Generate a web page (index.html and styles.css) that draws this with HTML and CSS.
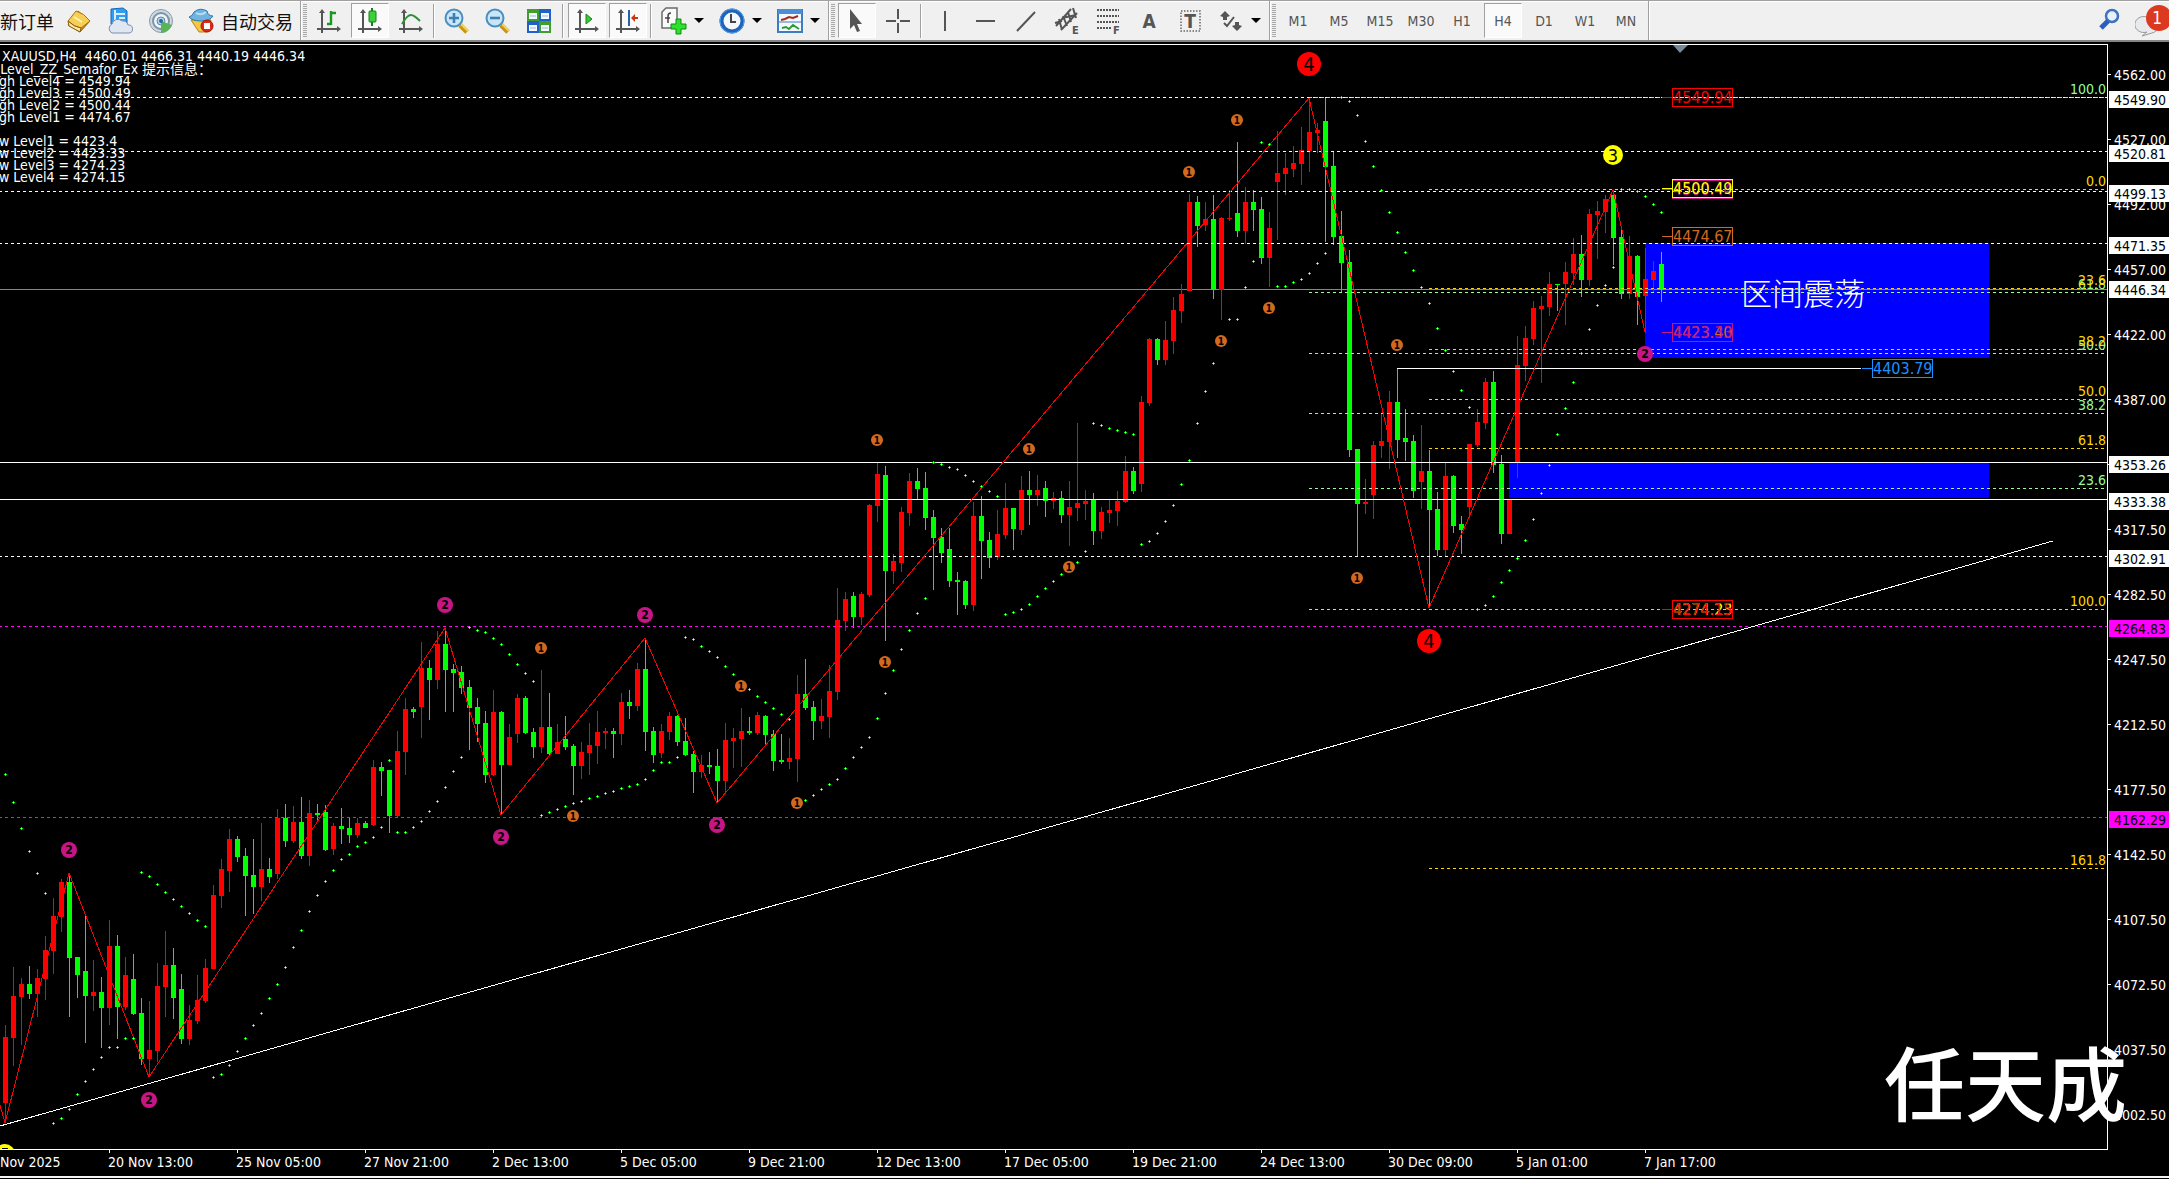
FILE: index.html
```html
<!DOCTYPE html>
<html lang="zh-CN">
<head>
<meta charset="utf-8">
<title>XAUUSD,H4</title>
<link rel="stylesheet" href="styles.css">
</head>
<body>
<header class="toolbar">
  <div class="group group-first">
    <button class="btn btn-text btn-order">新订单</button>
    <button class="btn" aria-label="Market"><svg class="ico" viewBox="0 0 26 26"><path d="M2 17 12 3 24 13 14 24Z" fill="#d9961c" stroke="#8a5a0a"/><path d="M2 13 10 3Q18 5 24 13L15 20Q8 19 2 13Z" fill="#f7cf55" stroke="#a9700f"/><path d="M2 13Q8 19 15 20L14 24 3 18Z" fill="#fbeaa5" stroke="#8a5a0a"/><path d="M8 9l8 5" stroke="#fff2b8" stroke-width="2"/></svg></button>
    <button class="btn" aria-label="Cloud"><svg class="ico" viewBox="0 0 26 26"><path d="M4 1 16 0 20 3V16H4Z" fill="#2f9df0" stroke="#1769b5"/><path d="M8 2V13M8 6H18M12 10H18" stroke="#d5efff" stroke-width="2"/><path d="M5 25a5 5 0 0 1 0-9 6 6 0 0 1 10-3 5 5 0 0 1 6 4 4 4 0 0 1 1 8Z" fill="#dfe7f3" stroke="#7a8cab"/></svg></button>
    <button class="btn" aria-label="Signals"><svg class="ico" viewBox="0 0 26 26"><circle cx="13" cy="13" r="11.5" fill="#cfd9e2" stroke="#8799a8"/><circle cx="13" cy="13" r="8" fill="#eef3f6" stroke="#7c93a6" stroke-width="2"/><circle cx="13" cy="13" r="4" fill="#b8d4ea" stroke="#5c87ab"/><path d="M13 13 24 17Q20 25 13 25Z" fill="#57b457"/><circle cx="13" cy="13" r="2" fill="#2468a8"/></svg></button>
    <button class="btn btn-auto"><svg class="ico" viewBox="0 0 26 26"><path d="M3 12H23L19 24H11Z" fill="#f3c83e" stroke="#b7841a"/><path d="M1 9Q5 8 6 4 12-1 19 3 20 8 25 8 22 13 13 13 4 13 1 9Z" fill="#6fb3e0" stroke="#2f77a8"/><path d="M8 5q5 3 10-1" stroke="#b9def5" fill="none" stroke-width="2"/><circle cx="19" cy="18" r="6" fill="#dc2a1a" stroke="#a51408"/><rect x="16" y="15" width="6" height="6" fill="#fff"/></svg><span>自动交易</span></button>
  </div>
  <div class="group">
    <i class="grip"></i>
    <button class="btn" aria-label="Bar chart"><svg class="ico" viewBox="0 0 26 26"><use href="#axes"/><path d="M15 3V17M15 5H20M11 16H15" stroke="#199a1e" stroke-width="2.400" fill="none"/></svg></button>
    <button class="btn on" aria-label="Candlesticks"><svg class="ico" viewBox="0 0 26 26"><use href="#axes"/><path d="M15 0V18" stroke="#118216" stroke-width="2"/><rect x="12" y="3" width="7" height="11" rx="1" fill="#3ecf3e" stroke="#118216"/></svg></button>
    <button class="btn" aria-label="Line chart"><svg class="ico" viewBox="0 0 26 26"><use href="#axes"/><path d="M4 16Q9 7 13 7 16 7 22 13" stroke="#2f8f3a" stroke-width="2" fill="none"/></svg></button>
    <i class="sep"></i>
    <button class="btn" aria-label="Zoom in"><svg class="ico" viewBox="0 0 26 26"><use href="#lens"/><path d="M10 5V15M5 10H15" stroke="#3c7fb0" stroke-width="2.600"/></svg></button>
    <button class="btn" aria-label="Zoom out"><svg class="ico" viewBox="0 0 26 26"><use href="#lens"/><path d="M5 10H15" stroke="#3c7fb0" stroke-width="2.600"/></svg></button>
    <button class="btn" aria-label="Tile windows"><svg class="ico" viewBox="0 0 26 26"><rect x="1" y="1" width="12" height="12" fill="#3f9e2c"/><rect x="13" y="1" width="12" height="12" fill="#2160c8"/><rect x="1" y="13" width="12" height="12" fill="#2160c8"/><rect x="13" y="13" width="12" height="12" fill="#3f9e2c"/><path d="M3 5H11V11H3ZM15 5H23V11H15ZM3 17H11V23H3ZM15 17H23V23H15Z" fill="#f4f8ff"/><path d="M4 8H10M16 8H22M4 20H10M16 20H22" stroke="#9db7d8"/></svg></button>
    <i class="sep sep-wide"></i>
    <button class="btn on" aria-label="Auto scroll"><svg class="ico" viewBox="0 0 26 26"><use href="#axes"/><path d="M12 6 18 11 12 16Z" fill="#37c837" stroke="#128a18"/></svg></button>
    <button class="btn on" aria-label="Chart shift"><svg class="ico" viewBox="0 0 26 26"><use href="#axes"/><path d="M14 2V18" stroke="#2563a8" stroke-width="2"/><path d="M23 10H18" stroke="#c9350f" stroke-width="2"/><path d="M16 10 20 6V14Z" fill="#c9350f"/></svg></button>
    <i class="sep"></i>
    <button class="btn btn-drop" aria-label="Indicators"><svg class="ico" viewBox="0 0 26 26"><path d="M1 4 5 0H16V20H1Z" fill="#fafafa" stroke="#6b6b6b" stroke-width="1.500"/><path d="M7 15V8Q7 5 10 5M4 10H9" stroke="#444" stroke-width="1.500" fill="none"/><path d="M12 11H17V16H22V21H17V26H12V21H7V16H12Z" transform="translate(3 0)" fill="#2fe02f" stroke="#0c8c12"/></svg></button>
    <button class="btn btn-drop" aria-label="Periods"><svg class="ico" viewBox="0 0 26 26"><circle cx="13" cy="13" r="10.500" fill="#f3f8fc" stroke="#1e63b8" stroke-width="4"/><circle cx="13" cy="13" r="12" fill="none" stroke="#4f9be6"/><path d="M12 6V14H17" stroke="#444" stroke-width="2" fill="none"/></svg></button>
    <button class="btn btn-drop" aria-label="Templates"><svg class="ico" viewBox="0 0 26 26"><rect x="1" y="2" width="24" height="22" fill="#f4f9ff" stroke="#3c7cc0" stroke-width="2"/><rect x="1" y="1" width="24" height="5" fill="#4a8ed6"/><path d="M1 14H25" stroke="#3c7cc0"/><path d="M4 12 8 11 12 9 16 10 21 8" stroke="#a62a1a" stroke-width="2" fill="none"/><path d="M5 20 9 19 12 21 16 17 22 21" stroke="#2f9a35" stroke-width="2" fill="none"/></svg></button>
  </div>
  <div class="group">
    <i class="grip"></i>
    <button class="btn on" aria-label="Cursor"><svg class="ico" viewBox="0 0 26 26"><path d="M6 1V21L10 17 13 24 16 23 13 16H18Z" fill="#555"/></svg></button>
    <button class="btn" aria-label="Crosshair"><svg class="ico" viewBox="0 0 26 26"><path d="M13 1V11M13 15V25M1 13H11M15 13H25" stroke="#555" stroke-width="2"/></svg></button>
    <i class="sep"></i>
    <button class="btn" aria-label="Vertical line"><svg class="ico" viewBox="0 0 26 26"><path d="M14 3V23" stroke="#555" stroke-width="2"/></svg></button>
    <button class="btn" aria-label="Horizontal line"><svg class="ico" viewBox="0 0 26 26"><path d="M4 13H23" stroke="#555" stroke-width="2"/></svg></button>
    <button class="btn" aria-label="Trendline"><svg class="ico" viewBox="0 0 26 26"><path d="M4 23 22 4" stroke="#555" stroke-width="2"/></svg></button>
    <button class="btn" aria-label="Channel"><svg class="ico" viewBox="0 0 26 26"><path d="M2 18 17 1M7 22 23 5M5 11 8 22M9 8 13 18M14 4 17 14M19 0 22 10M1 15 8 13M8 10 22 7" stroke="#555" stroke-width="2"/><text x="18" y="26" class="ico-letter">E</text></svg></button>
    <button class="btn" aria-label="Fibonacci"><svg class="ico" viewBox="0 0 26 26"><path d="M2 2H24M2 8H24M2 14H24M2 20H16" stroke="#555" stroke-width="2" stroke-dasharray="2 1"/><text x="18" y="26" class="ico-letter">F</text></svg></button>
    <button class="btn" aria-label="Text"><svg class="ico" viewBox="0 0 26 26"><text x="13" y="20" class="ico-big">A</text></svg></button>
    <button class="btn" aria-label="Text label"><svg class="ico" viewBox="0 0 26 26"><rect x="4" y="3" width="19" height="20" fill="none" stroke="#666" stroke-width="1.500" stroke-dasharray="1.500 1.500"/><text x="13" y="20" class="ico-big">T</text></svg></button>
    <button class="btn btn-drop" aria-label="Arrows"><svg class="ico" viewBox="0 0 26 26"><path d="M7 3 12 8 9 9V12H5V9L2 8ZM19 23 14 18 17 17V14H21V17L24 18Z" fill="#555"/><path d="M6 15 9 18 16 9" stroke="#555" stroke-width="2" fill="none"/></svg></button>
  </div>
  <div class="group group-last">
    <i class="grip"></i>
    <button class="btn tf">M1</button>
    <button class="btn tf">M5</button>
    <button class="btn tf">M15</button>
    <button class="btn tf">M30</button>
    <button class="btn tf">H1</button>
    <button class="btn tf on">H4</button>
    <button class="btn tf">D1</button>
    <button class="btn tf">W1</button>
    <button class="btn tf">MN</button>
  </div>
  <div class="group group-end">
    <button class="btn" aria-label="Search"><svg class="ico" viewBox="0 0 26 26"><circle cx="15" cy="8" r="6" fill="#e6f1fb" stroke="#3f72bd" stroke-width="2.500"/><path d="M11 13 4 20" stroke="#2860bd" stroke-width="5"/></svg></button>
    <button class="btn btn-chat" aria-label="Messages"><svg class="ico-chat" viewBox="0 0 34 35"><path d="M12 14a9 8 0 1 0 0 15l-5 4 10-3a9 8 0 0 0 3-14Z" fill="#e8eaee" stroke="#999"/><circle cx="24" cy="15" r="13" fill="#dc3a20"/><text x="22" y="21" class="badge">1</text></svg></button>
  </div>
</header>

<svg class="defs" width="0" height="0" aria-hidden="true">
  <defs>
    <g id="axes"><path d="M6 3V25M1 21H23" stroke="#555" stroke-width="2" fill="none"/><path d="M6 1 9 5H3ZM25 21 21 24V18Z" fill="#555"/></g>
    <g id="lens"><path d="M16 17 23 24" stroke="#c99414" stroke-width="5"/><path d="M17 16 24 23" stroke="#f4d35c" stroke-width="2"/><circle cx="10" cy="10" r="8.500" fill="#c9e6f9" stroke="#4a8fc0" stroke-width="2"/></g>
  </defs>
</svg>

<main>
<svg class="chart" viewBox="0 42 2169 1137">
  <defs><clipPath id="plot"><rect x="0" y="45" width="2107" height="1104"/></clipPath></defs>
  <g clip-path="url(#plot)">
    <g class="zones"><rect x="1645" y="243" width="344" height="115"/><rect x="1509" y="463" width="480" height="35"/></g>
    <g id="lines" class="lines"></g>
    <g id="candles" class="crisp"></g>
    <g id="overlay" class="lines"></g>
    <g id="dots" class="crisp"></g>
    <g id="marks"></g>
    <text class="zone-title" x="1741" y="305">区间震荡</text>
    <g id="tags"></g>
    <g id="fibs" class="label end"></g>
    <path d="M1673 45H1688L1680 53Z" fill="#778899"/>
  </g>
  <g class="label white">
    <text x="2" y="61" xml:space="preserve">XAUUSD,H4  4460.01 4466.31 4440.19 4446.34</text>
    <text x="-6" y="74">_Level_ZZ_Semafor_Ex 提示信息：</text>
    <text x="-1" y="86">gh Level4 = 4549.94</text>
    <text x="-1" y="98">gh Level3 = 4500.49</text>
    <text x="-1" y="110">gh Level2 = 4500.44</text>
    <text x="-1" y="122">gh Level1 = 4474.67</text>
    <text x="-1" y="146">w Level1 = 4423.4</text>
    <text x="-1" y="158">w Level2 = 4423.33</text>
    <text x="-1" y="170">w Level3 = 4274.23</text>
    <text x="-1" y="182">w Level4 = 4274.15</text>
  </g>
  <path class="frame" d="M0 44.500H2107.500V1149.500H0"/>
  <g id="axis" class="label"></g>
  <rect x="0" y="1176" width="2169" height="2" fill="#f4f4f4"/>
  <text class="watermark" x="1884" y="1115">任天成</text>
</svg>
</main>
<script src="chart.js"></script>
</body>
</html>
```

FILE: styles.css
```css
* { box-sizing: border-box; }
body {
  margin: 0;
  background: #000;
  font-family: "DejaVu Sans Condensed", "Noto Sans", "Noto Sans CJK SC", sans-serif;
  overflow-x: hidden;
}
.toolbar {
  display: flex;
  height: 42px;
  background: #f0f0f0;
  border-top: 1px solid #a0a0a0;
  border-bottom: 2px solid #858585;
  overflow: hidden;
}
.group {
  display: flex;
  align-items: center;
  gap: 3px;
  padding: 0 2px;
  border-left: 1px solid #a0a0a0;
  box-shadow: inset 1px 0 #fff, inset 0 1px #fff;
}
.group-first { border-left: 0; padding: 0 6px 0 0; box-shadow: inset 0 1px #fff; }
.group-last { padding-right: 3px; }
.group-end { flex: 1; justify-content: flex-end; gap: 6px; padding-right: 0; }
.grip {
  width: 4px;
  height: 33px;
  background: repeating-linear-gradient(#a8a8a8 0 1px, #f0f0f0 1px 2px);
}
.sep { width: 2px; height: 34px; background: linear-gradient(90deg, #a0a0a0 50%, #fff 50%); }
.sep-wide { margin: 0 1px; }
.btn {
  display: flex;
  align-items: center;
  justify-content: center;
  flex: none;
  width: 38px;
  height: 35px;
  padding: 0;
  border: 1px solid transparent;
  background: none;
  color: #111;
  font-family: inherit;
}
.btn.on {
  background: #fafafa;
  border-color: #a0a0a0 #fff #fff #a0a0a0;
}
.btn-text, .btn-auto {
  width: auto;
  border: 0;
  font-family: "Noto Sans CJK SC", sans-serif;
  font-size: 18px;
}
.btn-order { margin-right: 3px; }
.btn-auto { gap: 7px; padding: 0 1px 0 5px; }
.btn-drop { width: 55px; justify-content: flex-start; gap: 7px; padding-left: 5px; }
.btn-drop::after {
  content: "";
  border: 5px solid transparent;
  border-top-color: #000;
  border-bottom: 0;
}
.tf { font-size: 14px; color: #555; }
.ico { width: 26px; height: 26px; flex: none; overflow: visible; }
.ico-letter { font-size: 11px; font-weight: bold; fill: #555; }
.ico-big { font-size: 19px; font-weight: bold; fill: #555; text-anchor: middle; }
.btn-chat { width: 34px; }
.ico-chat { width: 34px; height: 35px; flex: none; }
.badge { font-size: 17px; fill: #fff; text-anchor: middle; }
.defs { position: absolute; }

.chart { display: block; width: 100%; height: auto; }
.zones { fill: #0000ff; }
.crisp, .zones { shape-rendering: crispEdges; }
.lines { fill: none; stroke-width: 1px; shape-rendering: crispEdges; }
.dash { stroke-dasharray: 3 3; }
.frame { fill: none; stroke: #fff; shape-rendering: crispEdges; }
.label { font-size: 14px; }
.white { fill: #fff; }
.end { text-anchor: end; }
.tag { font-size: 16px; }
.mark { text-anchor: middle; font-weight: bold; }
.mark-big { font-weight: normal; }
.zone-title { font-family: "Noto Sans CJK SC", sans-serif; font-size: 31px; font-weight: 300; fill: #fff; }
.watermark { font-family: "Noto Sans CJK SC", sans-serif; font-size: 81px; font-weight: 500; fill: #fff; }
```

FILE: chart.js
```js
// One row per bar: direction, high, body top, body bottom, low.
const bars = `R 1025 1037 1103 1123,R 967 996 1038 1066,R 978 984 997 1045,G 966 984 994 999,R 969 978 994 1017,R 936 950 979 1000,R 898 916 951 974,R 879 882 917 932,G 874 882 958 1017,G 957 957 975 998,
G 915 971 996 1043,R 960 992 996 1011,G 977 992 1008 1048,R 920 946 1008 1025,G 935 946 1007 1039,R 957 975 1007 1010,G 954 979 1014 1015,G 998 1013 1059 1065,R 1001 1050 1059 1077,R 963 986 1051 1062,
R 931 965 987 1017,G 948 965 998 1019,G 974 989 1039 1044,R 1005 1020 1039 1045,R 975 1000 1021 1024,R 959 968 1001 1003,R 885 895 969 969,R 859 869 896 908,R 829 839 871 892,G 836 839 857 862,
G 848 856 876 916,G 839 875 887 914,R 823 869 887 901,G 858 869 877 883,R 809 818 874 879,G 804 818 841 847,R 806 822 841 843,G 797 822 856 859,R 800 813 856 866,G 804 813 815 820,
G 805 812 850 851,R 823 826 849 855,G 808 826 829 844,G 818 828 835 843,R 818 823 835 838,G 821 823 828 828,R 760 767 825 826,G 762 767 771 796,G 770 770 816 833,R 731 751 816 818,
R 698 709 752 775,G 707 709 712 718,R 642 668 707 738,G 660 668 680 720,R 631 644 680 689,G 628 644 670 712,G 664 669 673 712,G 666 672 688 694,G 680 687 708 750,G 698 707 724 742,
G 711 723 775 783,R 690 712 775 776,G 711 712 765 815,R 724 737 765 765,R 694 698 734 743,G 696 698 733 734,G 728 732 747 758,R 670 727 747 753,G 693 727 754 756,R 724 742 754 754,
G 716 739 747 750,G 744 746 766 795,R 742 752 766 779,R 723 745 753 775,R 711 732 746 764,R 728 731 733 749,G 728 731 734 758,R 693 702 734 745,G 690 702 706 719,R 663 669 706 711,
G 638 669 732 751,G 727 731 755 763,R 724 731 753 758,R 712 716 732 740,G 715 716 742 746,G 718 741 755 756,G 751 754 772 793,R 755 765 772 778,G 752 765 767 774,G 749 766 781 803,
R 723 740 781 794,R 728 738 741 768,R 708 731 739 767,G 717 731 733 735,R 712 715 733 735,G 715 716 735 745,G 730 734 761 771,G 734 760 762 764,R 738 758 762 769,R 675 694 759 782,
G 659 694 708 710,G 701 707 721 740,R 699 716 721 729,R 665 691 717 738,R 588 620 692 700,R 592 599 621 631,G 592 596 617 628,R 592 594 617 625,R 504 505 595 597,R 463 474 506 522,
G 466 475 571 641,R 554 561 571 584,R 507 512 563 572,R 473 481 513 526,G 468 481 489 499,G 472 488 518 530,G 510 517 538 590,G 528 537 553 563,G 528 549 581 587,G 572 580 582 615,
G 580 581 605 609,R 502 516 605 611,G 496 516 541 579,G 532 540 558 568,R 510 534 557 560,R 483 508 535 539,G 508 508 529 550,R 476 490 530 535,G 471 490 495 525,R 475 490 495 506,
G 481 488 501 517,R 492 498 501 509,G 491 498 515 523,R 481 507 515 546,R 423 503 508 521,R 490 501 504 520,G 493 500 531 545,R 507 512 531 539,R 500 510 513 523,R 491 501 511 526,
R 456 471 502 503,G 467 471 491 494,R 396 402 484 492,R 338 339 403 406,G 338 339 360 365,R 321 340 360 365,R 297 310 341 354,R 284 294 311 323,R 194 202 291 291,G 196 202 226 247,
R 202 219 225 231,G 195 219 290 299,R 217 218 290 320,R 190 218 219 221,G 142 213 231 237,R 187 202 231 244,G 190 202 210 231,G 197 209 258 264,R 212 228 258 287,R 131 173 182 240,
R 153 168 174 195,R 146 163 169 177,R 127 150 164 185,R 98 132 151 172,R 123 130 133 153,G 97 121 167 242,G 151 166 237 245,G 211 236 263 293,G 250 262 450 457,G 449 449 504 556,
R 479 502 504 514,R 441 445 495 519,R 414 441 446 458,R 391 402 442 469,G 369 402 440 458,G 409 438 442 461,G 435 441 491 498,R 425 471 482 509,G 450 471 510 608,G 492 509 550 556,
R 463 476 550 556,G 475 476 526 533,G 516 524 530 554,R 444 444 507 518,R 409 422 445 447,R 378 382 423 429,G 371 382 465 473,G 455 464 534 544,R 499 499 534 534,R 336 365 463 478,
R 326 338 366 381,R 301 308 339 345,R 296 306 309 383,R 272 284 307 316,G 284 284 285 311,R 262 272 284 325,R 238 254 273 285,G 235 254 280 297,R 209 214 280 286,R 201 211 215 259,
R 195 199 212 233,G 192 195 238 265,G 227 237 294 299,R 236 256 294 299,G 255 256 297 325,R 248 279 296 333,R 261 271 280 293,G 252 264 290 302`;

// Parabolic SAR runs: first bar index, then one value per bar.
const sar = [
  [0, 774, 802, 828, 851, 873, 893],
  [6, 1123, 1118, 1109, 1094, 1081, 1069, 1057, 1047, 1047, 1038, 1038],
  [17, 872, 876, 884, 892, 899, 906, 913, 920, 926],
  [26, 1077, 1074, 1065, 1051, 1038, 1025, 1013, 998, 984, 967, 947, 930, 911, 895, 881, 870, 859, 854, 846, 842, 837, 827, 760, 832, 832, 827, 821, 811, 801, 787, 771, 757],
  [58, 627, 630, 632, 638, 644, 654, 664, 673, 681],
  [67, 815, 812, 809, 806, 803, 801, 798, 796, 793, 791, 788, 786, 784, 779, 770, 762, 762, 757],
  [85, 637, 639, 646, 651, 657, 666, 674, 683, 689, 696, 702, 708, 714, 719],
  [99, 803, 800, 795, 789, 784, 779, 768, 757, 747, 737, 718, 693, 670, 649, 630, 613, 598],
  [116, 462, 464, 467, 469, 475, 481, 486, 491, 496],
  [125, 614, 612, 609, 604, 596, 588, 581, 574, 568, 562, 551],
  [136, 423, 425, 428, 430, 432, 434],
  [142, 544, 541, 533, 521, 505, 484, 460, 423, 391, 363, 340, 319, 319, 287, 261, 142, 144],
  [159, 286, 286, 282, 279, 273, 263, 253],
  [167, 97, 101, 115, 141, 166, 190, 212, 232, 252, 270, 287, 303, 328, 350, 371, 390, 407],
  [184, 609, 605, 596, 582, 570, 558, 540, 519, 493, 465, 434, 408, 382, 353, 329, 305, 285, 267],
  [202, 189, 189, 191, 196, 204, 212]
];

const put = (id, html) => { document.getElementById(id).innerHTML = html; };
const barX = i => 5 + 8 * i;

put("candles", bars.split(",").map((row, i) => {
  const [dir, high, top, bottom, low] = row.trim().split(" ");
  const color = dir === "R" ? "#ff0000" : "#00ff00";
  const x = barX(i);
  return `<path fill="${color}" d="M${x} ${high}h1V${low}h-1ZM${x - 2} ${top}h5V${bottom}h-5Z"/>`;
}).join(""));

put("dots", sar.map(([first, ...values]) => values.map((y, k) => {
  const x = barX(first + k);
  return `<path fill="#00ff00" d="M${x - 1} ${y}h3v1h-3ZM${x} ${y - 1}h1v3h-1Z"/><rect x="${x}" y="${y}" width="1" height="1" fill="#e0ffe0"/>`;
}).join("")).join(""));

const hline = (y, from, to, color, dash) =>
  `<path ${dash ? 'class="dash"' : ""} stroke="${color}" d="M${from} ${y + 0.5}H${to}"/>`;

const green = "#98fb98", gold = "#ffd700", magenta = "#ff00ff", violet = "#c71585", orange = "#d2691e";
const fibs = [
  [97, green, "100.0"], [292, green, "61.8"], [353, green, "50.0"], [413, green, "38.2"], [488, green, "23.6"], [609, green, ""],
  [189, gold, "0.0"], [288, gold, "23.6"], [349, gold, "38.2"], [399, gold, "50.0"], [448, gold, "61.8"], [609, gold, "100.0"], [868, gold, "161.8"]
];

put("overlay",
  [97, 151, 191, 243, 556].map(y => hline(y, -1, 2107, "#fff", true)).join("") +
  [626, 817].map(y => hline(y, -1, 2107, magenta, true)).join("") +
  fibs.map(([y, c]) => hline(y, c === green ? 1309 : 1429, y === 609 && c === green ? 1429 : 2105, c, true)).join("") +
  [462, 499].map(y => hline(y, 0, 2107, "#fff", false)).join("") +
  hline(368, 1397, 1861, "#fff", false) +
  `<path stroke="#fff" d="M0 1126 2053 541"/>` +
  `<path stroke="#f00" d="M0 1105 5 1123 69 873 149 1077 445 628 501 815 645 638 717 803 1309 98 1429 608 1613 190 1645 332"/>`);
put("lines", hline(289, 0, 2107, "#778899", false));

put("fibs", fibs.map(([y, c, t]) => `<text x="2106" y="${y - 3}" fill="${c}">${t}</text>`).join(""));

const mark = (x, y, r, color, n, size, cls) =>
  `<circle cx="${x}" cy="${y}" r="${r}" fill="${color}"/><text class="mark ${cls}" x="${x}" y="${y + Math.round(size * 0.37)}" font-size="${size}">${n}</text>`;
put("marks",
  [[69, 850], [149, 1100], [445, 605], [501, 837], [645, 615], [717, 825], [1645, 354]].map(([x, y]) => mark(x, y, 8, violet, 2, 12, "")).join("") +
  [[541, 648], [573, 816], [741, 686], [877, 440], [1029, 449], [885, 662], [797, 803], [1069, 567], [1237, 120], [1189, 172], [1269, 308], [1221, 341], [1397, 345], [1357, 578]].map(([x, y]) => mark(x, y, 6, orange, 1, 10, "")).join("") +
  [[1309, 64], [1429, 641]].map(([x, y]) => mark(x, y, 12, "#f00", 4, 20, "mark-big")).join("") +
  mark(1613, 155, 10, "#ff0", 3, 18, "mark-big") +
  `<circle cx="5" cy="1154" r="10" fill="#ff0"/><rect x="2" y="1148" width="6" height="1"/>`);

const tag = (x, y, color, text) =>
  `<path class="lines" stroke="${color}" d="M${x - 10} ${y + 9.5}H${x}M${x + 0.5} ${y + 0.5}h60v18h-60Z"/><text class="tag" x="${x + 1}" y="${y + 15}" fill="${color}">${text}</text>`;
put("tags",
  tag(1672, 88, "#f00", "4549.94") + tag(1672, 180, violet, "4500.44") + tag(1672, 179, "#ff0", "4500.49") +
  tag(1672, 227, orange, "4474.67") + tag(1672, 323, orange, "4423.40") + tag(1672, 323, violet, "4423.33") +
  tag(1672, 600, "#ff0", "4274.23") + tag(1672, 600, "#f00", "4274.15") + tag(1872, 359, "#1e90ff", "4403.79"));

let axis = "";
for (let k = 0; k < 17; k++) {
  const y = 74 + 65 * k;
  const price = (k < 7 ? 4562 : 4562.5) - 35 * k;
  axis += `<rect x="2108" y="${y}" width="3" height="1" fill="#fff"/>`;
  if (k !== 6) axis += `<text class="white" x="2114" y="${y + 6}">${price.toFixed(2)}</text>`;
}
axis += [[91, "4549.90"], [145, "4520.81"], [185, "4499.13"], [237, "4471.35"], [281, "4446.34"], [456, "4353.26"], [493, "4333.38"], [550, "4302.91"], [620, "4264.83"], [811, "4162.29"]]
  .map(([y, t]) => `<rect x="2109" y="${y}" width="60" height="17" fill="${y > 600 ? magenta : "#fff"}"/><text x="2114" y="${y + 14}">${t}</text>`).join("");
const times = ["20 Nov 13:00", "25 Nov 05:00", "27 Nov 21:00", "2 Dec 13:00", "5 Dec 05:00", "9 Dec 21:00", "12 Dec 13:00", "17 Dec 05:00", "19 Dec 21:00", "24 Dec 13:00", "30 Dec 09:00", "5 Jan 01:00", "7 Jan 17:00"];
axis += `<text class="white" x="0" y="1167">Nov 2025</text>` + times.map((t, k) =>
  `<rect x="${109 + 128 * k}" y="1150" width="1" height="3" fill="#fff"/><text class="white" x="${108 + 128 * k}" y="1167">${t}</text>`).join("");
put("axis", axis);
```
